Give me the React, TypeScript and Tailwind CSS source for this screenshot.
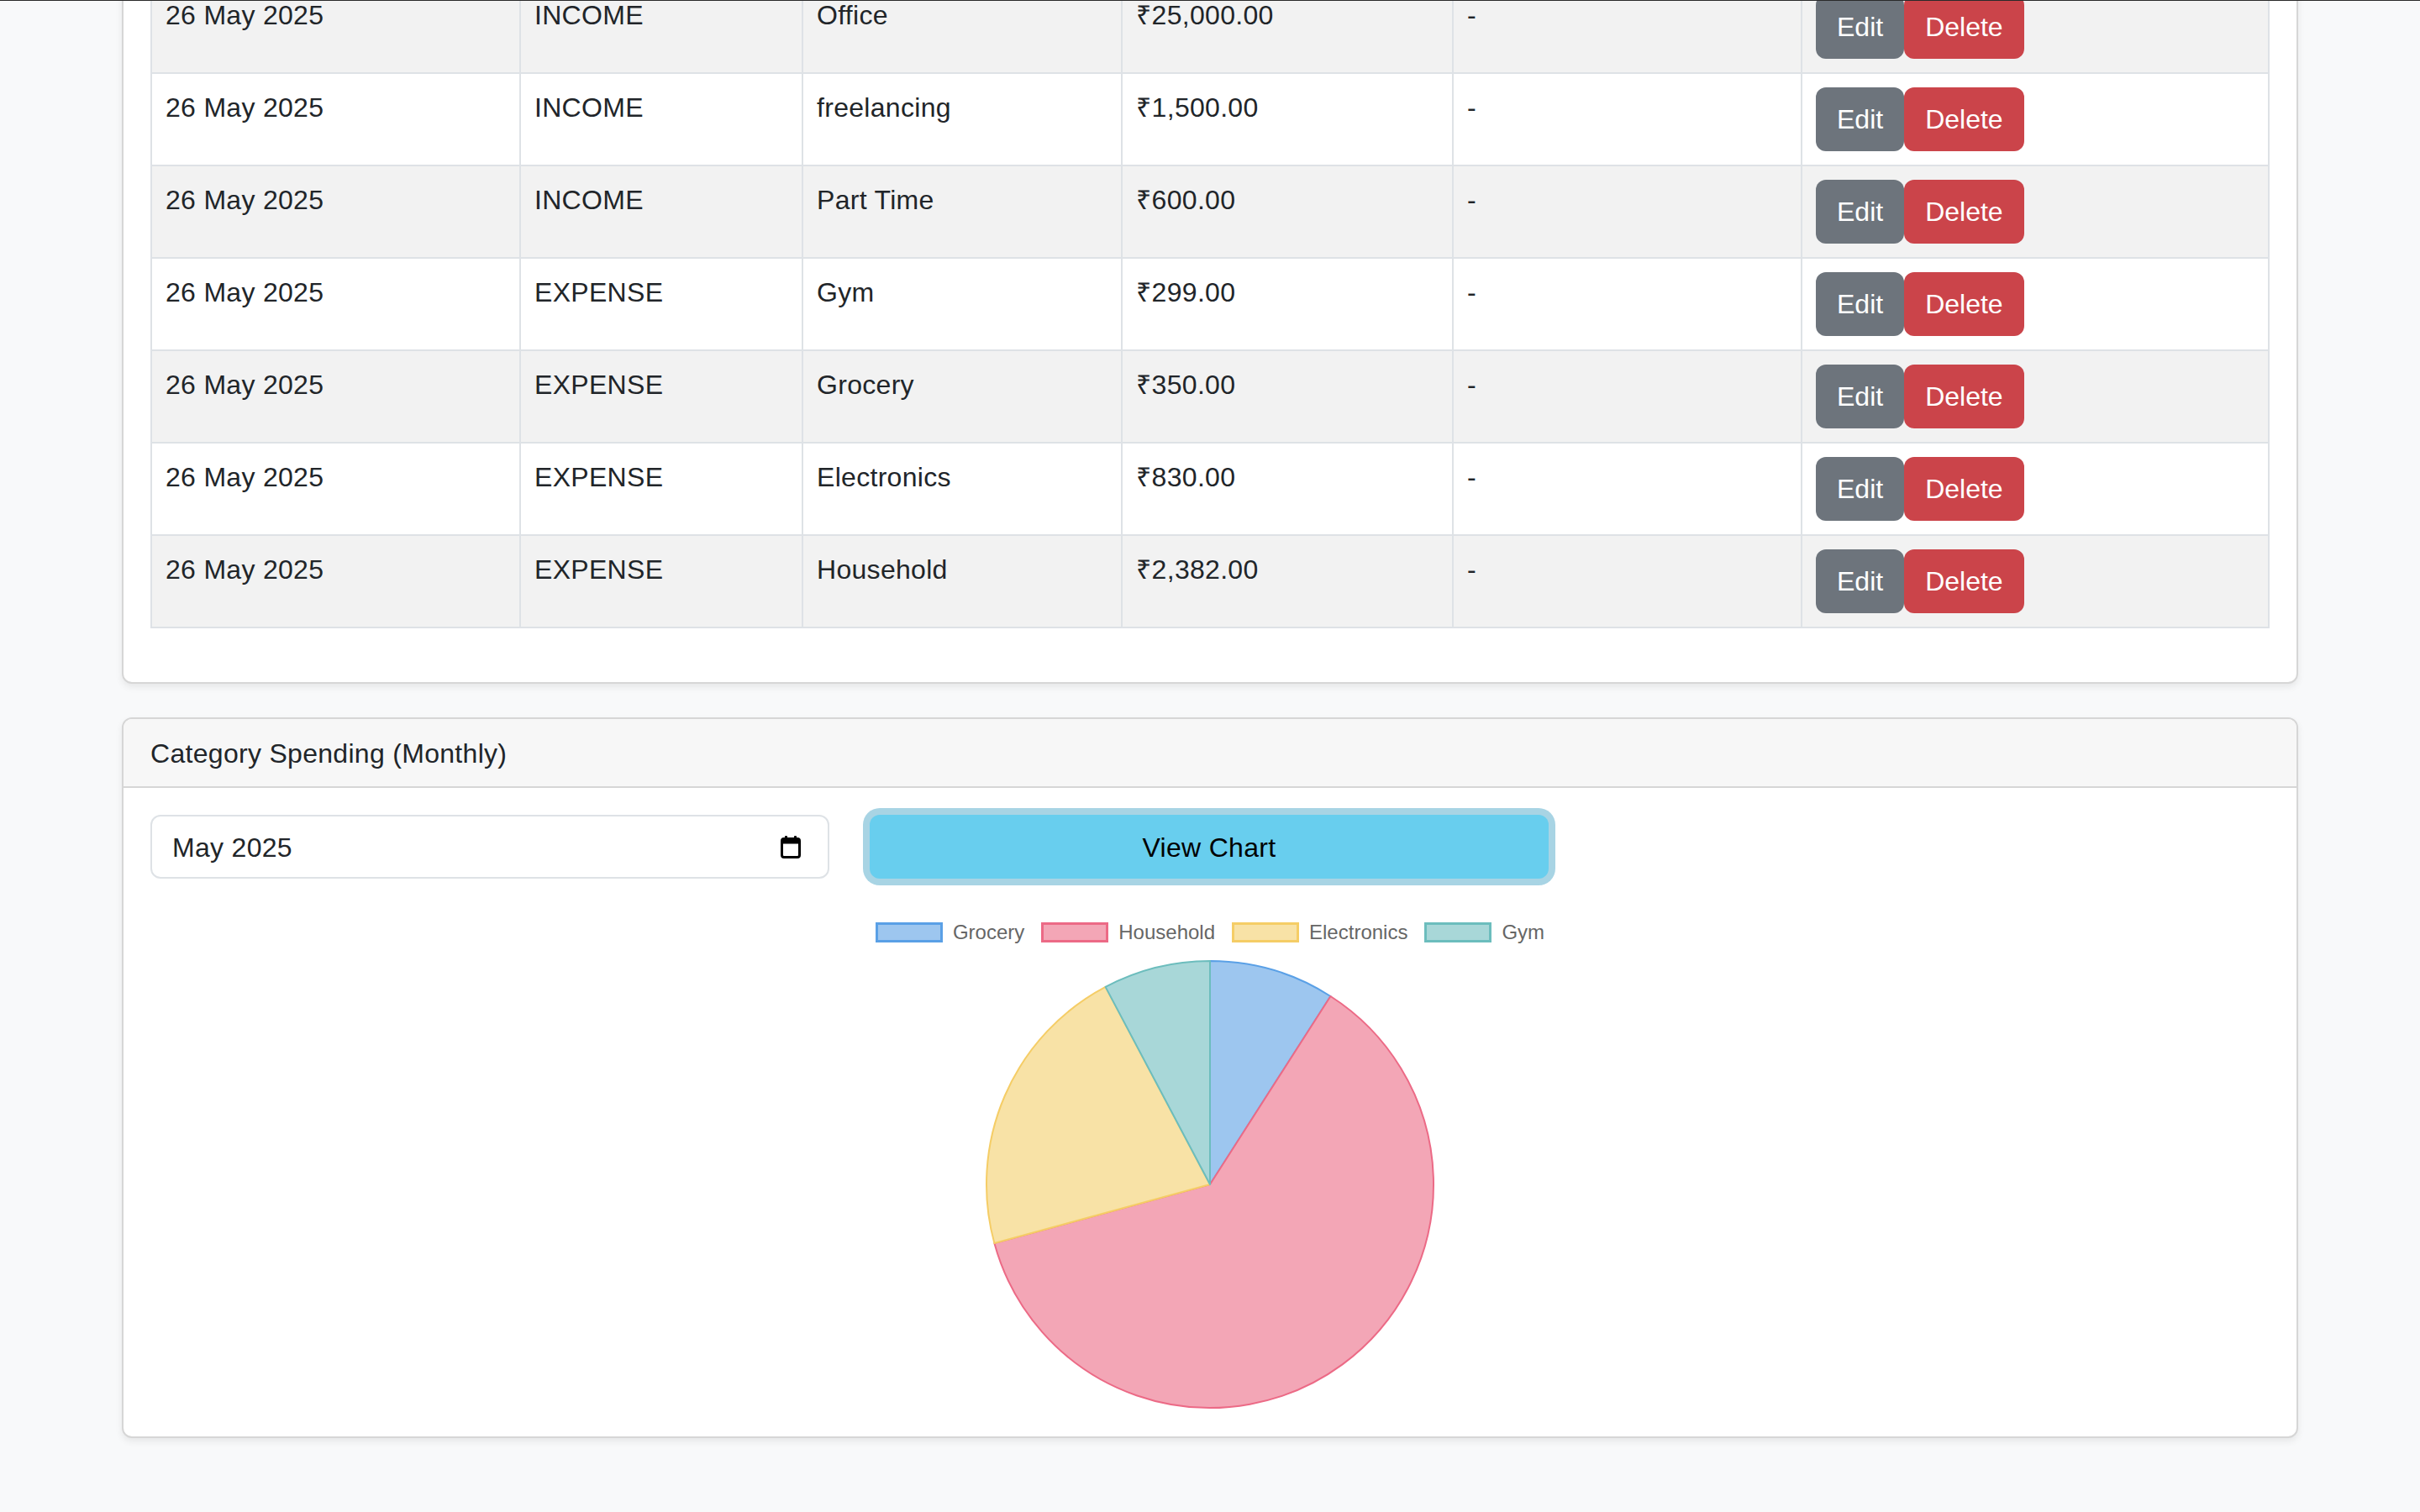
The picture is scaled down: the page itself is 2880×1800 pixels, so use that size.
import React from 'react';

const rows = [
  { date: '26 May 2025', type: 'INCOME', cat: 'Office', amt: '₹25,000.00' },
  { date: '26 May 2025', type: 'INCOME', cat: 'freelancing', amt: '₹1,500.00' },
  { date: '26 May 2025', type: 'INCOME', cat: 'Part Time', amt: '₹600.00' },
  { date: '26 May 2025', type: 'EXPENSE', cat: 'Gym', amt: '₹299.00' },
  { date: '26 May 2025', type: 'EXPENSE', cat: 'Grocery', amt: '₹350.00' },
  { date: '26 May 2025', type: 'EXPENSE', cat: 'Electronics', amt: '₹830.00' },
  { date: '26 May 2025', type: 'EXPENSE', cat: 'Household', amt: '₹2,382.00' },
];

const slices = [
  { label: 'Grocery', v: 350, fill: '#9dc6ef', stroke: '#5aa0e6' },
  { label: 'Household', v: 2382, fill: '#f3a6b6', stroke: '#ec6a86' },
  { label: 'Electronics', v: 830, fill: '#f8e2a6', stroke: '#f5cd66' },
  { label: 'Gym', v: 299, fill: '#a8d7d8', stroke: '#6cbdbd' },
];

function Pie() {
  const total = slices.reduce((s, d) => s + d.v, 0);
  const cx = 268;
  const cy = 268;
  const r = 266;
  let a = -Math.PI / 2;
  const paths = slices.map((d) => {
    const a0 = a;
    const a1 = a + (d.v / total) * Math.PI * 2;
    a = a1;
    const x0 = cx + r * Math.cos(a0);
    const y0 = cy + r * Math.sin(a0);
    const x1 = cx + r * Math.cos(a1);
    const y1 = cy + r * Math.sin(a1);
    const large = a1 - a0 > Math.PI ? 1 : 0;
    return {
      ...d,
      d: `M ${cx} ${cy} L ${x0} ${y0} A ${r} ${r} 0 ${large} 1 ${x1} ${y1} Z`,
    };
  });
  return (
    <svg width="536" height="536" viewBox="0 0 536 536">
      {paths.map((p) => (
        <path key={p.label} d={p.d} fill={p.fill} stroke={p.stroke} strokeWidth="2" strokeLinejoin="round" />
      ))}
    </svg>
  );
}

function CalendarIcon() {
  return (
    <svg width="24" height="28" viewBox="0 0 24 28">
      <rect x="1.5" y="4.5" width="21" height="22" rx="2.5" fill="none" stroke="#000" strokeWidth="3" />
      <rect x="1.5" y="4.5" width="21" height="6" fill="#000" />
      <rect x="5" y="1" width="3" height="5" rx="1" fill="#000" />
      <rect x="16" y="1" width="3" height="5" rx="1" fill="#000" />
    </svg>
  );
}

const cell =
  'border-2 border-[#dee2e6] px-[16px] py-[16px] align-top text-[32px] leading-[48px] text-[#212529] tracking-[0.3px]';

export default function App() {
  return (
    <div className="relative w-full h-[1800px] overflow-hidden bg-[#f8f9fa] font-['Liberation_Sans','Noto_Sans',sans-serif]">
      <div className="absolute top-0 left-0 right-0 h-px bg-[#2a2a2a] z-10" />
      <div className="mx-auto w-[2590px] -mt-[58px] flex flex-col">
        {/* Transactions card */}
        <div className="bg-white border-2 border-[#d6d6d6] rounded-[12px] shadow-[0_4px_8px_rgba(0,0,0,0.075)] p-[32px]">
          <table className="w-full border-collapse table-fixed mb-[32px]">
            <colgroup>
              <col className="w-[439px]" />
              <col className="w-[336px]" />
              <col className="w-[380px]" />
              <col className="w-[394px]" />
              <col className="w-[415px]" />
              <col />
            </colgroup>
            <tbody>
              {rows.map((r, i) => (
                <tr key={i} className={i % 2 === 0 ? 'bg-[#f2f2f2]' : 'bg-white'}>
                  <td className={cell}>{r.date}</td>
                  <td className={cell}>{r.type}</td>
                  <td className={cell}>{r.cat}</td>
                  <td className={cell}>{r.amt}</td>
                  <td className={cell}>-</td>
                  <td className="border-2 border-[#dee2e6] px-[16px] py-[16px] align-top">
                    <div className="flex">
                      <button className="h-[76px] px-[25px] rounded-[12px] bg-[#6d747c] text-white text-[32px] leading-[48px]">
                        Edit
                      </button>
                      <button className="h-[76px] px-[25px] rounded-[12px] bg-[#cb444a] text-white text-[32px] leading-[48px]">
                        Delete
                      </button>
                    </div>
                  </td>
                </tr>
              ))}
            </tbody>
          </table>
        </div>

        {/* Category spending card */}
        <div className="mt-[40px] bg-white border-2 border-[#d6d6d6] rounded-[12px] shadow-[0_4px_8px_rgba(0,0,0,0.075)] overflow-hidden">
          <div className="bg-[#f7f7f7] border-b-2 border-[#d6d6d6] px-[32px] pt-[17px] pb-[15px] text-[32px] leading-[48px] text-[#212529] tracking-[0.3px]">
            Category Spending (Monthly)
          </div>
          <div className="p-[32px]">
            <div className="flex gap-[48px]">
              <div className="w-[808px] h-[76px] border-2 border-[#dee2e6] rounded-[12px] flex items-center justify-between pl-[24px] pr-[32px] text-[32px] text-[#212529] tracking-[0.3px]">
                <span className="pt-[2px]">May 2025</span>
                <CalendarIcon />
              </div>
              <button className="w-[808px] h-[76px] pt-[2px] rounded-[12px] bg-[#68ceee] shadow-[0_0_0_8px_#a8d4e4] text-black text-[32px] leading-[48px] tracking-[0.3px]">
                View Chart
              </button>
            </div>
            <div className="mt-[32px] flex flex-col items-center h-[600px]">
              <div className="flex items-center gap-[20px] py-[20px] h-[64px] font-['Liberation_Sans',Arial,sans-serif]">
                {slices.map((s) => (
                  <div key={s.label} className="flex items-center gap-[12px]">
                    <span
                      className="block w-[80px] h-[24px] border-[3px]"
                      style={{ background: s.fill, borderColor: s.stroke }}
                    />
                    <span className="text-[24px] leading-[24px] text-[#666666]">{s.label}</span>
                  </div>
                ))}
              </div>
              <Pie />
            </div>
          </div>
        </div>
      </div>
    </div>
  );
}
